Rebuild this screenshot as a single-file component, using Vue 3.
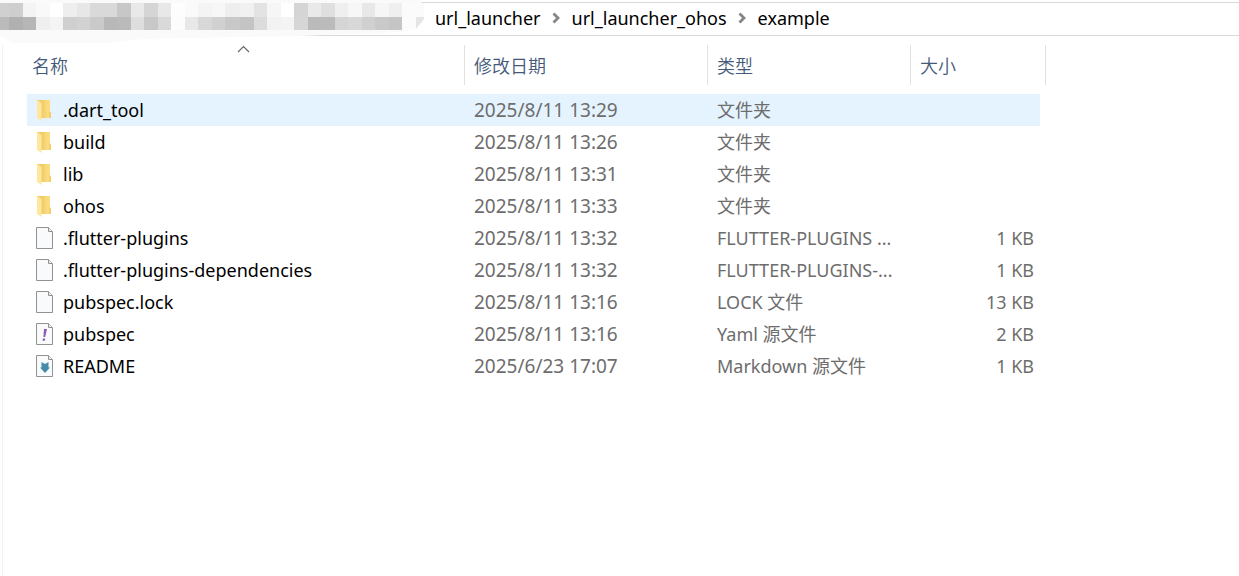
<script setup>
const edges = [0, 9, 23, 36, 50, 63, 77, 90, 104, 117, 131, 144, 158, 171, 185, 198, 212, 225, 240, 254, 267, 281, 294, 308, 321, 335, 348, 362, 375, 389, 402, 416, 424]
const top = 'd0 ce f4 f9 ff ee e7 d9 d9 c7 e9 d5 e8 fd fa f4 f7 ee f1 e3 f6 ff d5 e9 df ef f7 e8 f6 ef fb fb'.split(' ')
const bottom = 'bb b0 b6 ef f4 cf d2 ca b8 ba de c8 d9 fc e8 d8 d1 c8 c4 dc f2 f4 d6 ba bb d5 d8 d0 c9 c5 fb e5'.split(' ')
const tiles = top.flatMap((c, i) => [
  { x: edges[i], y: 3, w: edges[i + 1] - edges[i], h: 14, fill: `#${c}${c}${c}` },
  { x: edges[i], y: 17, w: edges[i + 1] - edges[i], h: 13, fill: `#${bottom[i]}${bottom[i]}${bottom[i]}` }
])
const crumbs = ['url_launcher', 'url_launcher_ohos', 'example']
const files = [
  { name: '.dart_tool', icon: 'folder', date: '2025/8/11 13:29', kind: '文件夹', size: '', selected: true },
  { name: 'build', icon: 'folder', date: '2025/8/11 13:26', kind: '文件夹', size: '' },
  { name: 'lib', icon: 'folder', date: '2025/8/11 13:31', kind: '文件夹', size: '' },
  { name: 'ohos', icon: 'folder', date: '2025/8/11 13:33', kind: '文件夹', size: '' },
  { name: '.flutter-plugins', icon: 'file', date: '2025/8/11 13:32', kind: 'FLUTTER-PLUGINS ...', size: '1 KB' },
  { name: '.flutter-plugins-dependencies', icon: 'file', date: '2025/8/11 13:32', kind: 'FLUTTER-PLUGINS-...', size: '1 KB' },
  { name: 'pubspec.lock', icon: 'file', date: '2025/8/11 13:16', kind: 'LOCK 文件', size: '13 KB' },
  { name: 'pubspec', icon: 'yaml', date: '2025/8/11 13:16', kind: 'Yaml 源文件', size: '2 KB' },
  { name: 'README', icon: 'markdown', date: '2025/6/23 17:07', kind: 'Markdown 源文件', size: '1 KB' }
]
</script>

<template>
  <div class="explorer">
    <nav class="address" aria-label="路径">
      <svg class="mosaic" width="426" height="44" viewBox="0 0 426 44" aria-hidden="true">
        <defs>
          <clipPath id="brush"><path d="M0 0H424V19L416 29L406 32H0Z" /></clipPath>
          <linearGradient id="folder-back" x1="0" x2="1" y1="0" y2="0">
            <stop offset="0.3" stop-color="#f0ca62" />
            <stop offset="0.75" stop-color="#fadb7f" />
          </linearGradient>
        </defs>
        <path d="M0 0H420Q427 10 423 20Q417 30 400 32L300 36Q180 38 145 39L108 43H12L0 36Z" fill="#fafafa" />
        <g clip-path="url(#brush)" shape-rendering="crispEdges">
          <rect v-for="(t, i) in tiles" :key="i" :x="t.x" :y="t.y" :width="t.w" :height="t.h" :fill="t.fill" />
        </g>
      </svg>
      <template v-for="(c, i) in crumbs" :key="c">
        <svg v-if="i" class="chevron" width="9" height="12" viewBox="0 0 9 12" aria-hidden="true">
          <path d="M1.5 1.5L6 6L1.5 10.5" fill="none" stroke="#858585" stroke-width="2.8" />
        </svg>
        <a href="#" class="crumb">{{ c }}</a>
      </template>
    </nav>

    <main class="pane">
      <table class="files">
        <colgroup>
          <col class="c-name" /><col class="c-date" /><col class="c-kind" /><col class="c-size" />
        </colgroup>
        <thead>
          <tr>
            <th>
              <button type="button">名称</button>
              <svg class="sort" width="13" height="8" viewBox="0 0 13 8" aria-hidden="true">
                <path d="M1 7L6.5 1.5L12 7" fill="none" stroke="#666" stroke-width="1.2" />
              </svg>
            </th>
            <th><button type="button">修改日期</button></th>
            <th><button type="button">类型</button></th>
            <th><button type="button">大小</button></th>
          </tr>
        </thead>
        <tbody>
          <tr v-for="f in files" :key="f.name" :class="{ selected: f.selected }">
            <td class="name">
              <div class="entry">
                <svg class="icon" width="18" height="24" viewBox="0 0 18 24" aria-hidden="true">
                  <template v-if="f.icon === 'folder'">
                    <path d="M1 2H14V13L15 14V20H5Z" fill="url(#folder-back)" />
                    <path d="M1 2L5.5 5V23L1 20Z" fill="#ffe79f" />
                    <path d="M13 14H15V20H13Z" fill="#f3cf6c" />
                  </template>
                  <template v-else>
                    <path d="M.5 1.5H12.5L16.5 5.5V22.5H.5Z" fill="#f9fafb" stroke="#929292" />
                    <path d="M12.5 1.5V5.5H16.5" fill="#e8e8e8" stroke="#929292" />
                    <path v-if="f.icon === 'yaml'" d="M8 7H11L9.2 15H7.4ZM7 16.5H9.3L8.8 18.8H6.5Z" fill="#8d5bb0" />
                    <path v-if="f.icon === 'markdown'" d="M5.5 8L9 10L12.5 8V13.5H14L9 19L4 13.5H5.5Z" fill="#468ba9" />
                  </template>
                </svg>
                <span>{{ f.name }}</span>
              </div>
            </td>
            <td class="date">{{ f.date }}</td>
            <td>{{ f.kind }}</td>
            <td class="size">{{ f.size }}</td>
          </tr>
        </tbody>
      </table>
    </main>
  </div>
</template>

<style>
body {
  margin: 0;
  background: #fff;
}
</style>

<style scoped>
.explorer {
  display: flex;
  flex-direction: column;
  min-height: 100vh;
  box-sizing: border-box;
  padding-top: 2px;
  font-family: "Noto Sans", "Noto Sans CJK SC", sans-serif;
  font-size: 18px;
  color: #000;
}
.address {
  position: relative;
  display: flex;
  align-items: center;
  gap: 11px;
  height: 30px;
  padding: 0 0 2px 435px;
  border-top: 1px solid #d9d9d9;
  border-bottom: 1px solid #d9d9d9;
}
.mosaic {
  position: absolute;
  left: 0;
  top: -3px;
}
.crumb {
  color: inherit;
  text-decoration: none;
  line-height: 28px;
}
.chevron {
  flex: none;
}
.pane {
  flex: 1;
  margin: 9px 0 0 2px;
  padding-left: 24px;
  border-left: 1px solid #f3f3f3;
}
.files {
  width: 1013px;
  table-layout: fixed;
  border-collapse: separate;
  border-spacing: 0;
}
.c-name { width: 438px; }
.c-date { width: 243px; }
.c-kind { width: 203px; }
th {
  position: relative;
  height: 40px;
  padding: 0;
  text-align: left;
  border-bottom: 9px solid #fff;
}
th::after {
  content: "";
  position: absolute;
  top: 0;
  right: 0;
  width: 1px;
  height: 40px;
  background: #e2e2e2;
}
th:last-child::after {
  right: -6px;
}
th button {
  display: block;
  width: 100%;
  height: 40px;
  padding: 0 0 0 9px;
  border: 0;
  background: none;
  text-align: left;
  font: inherit;
  font-weight: 350;
  font-family: "Noto Sans CJK SC", sans-serif;
  color: #44597a;
}
th:first-child button {
  padding-left: 5px;
}
.sort {
  position: absolute;
  left: 210px;
  top: 0;
}
td {
  height: 32px;
  padding: 0 0 0 9px;
  line-height: 32px;
  white-space: nowrap;
  color: #6d6d6d;
}
.name {
  color: #000;
}
.date {
  font-size: 19px;
}
.entry {
  display: flex;
  align-items: center;
  gap: 9px;
}
.icon {
  flex: none;
}
.size {
  padding: 0 6px 0 0;
  text-align: right;
}
.selected td {
  background: #e5f3ff;
}
</style>
